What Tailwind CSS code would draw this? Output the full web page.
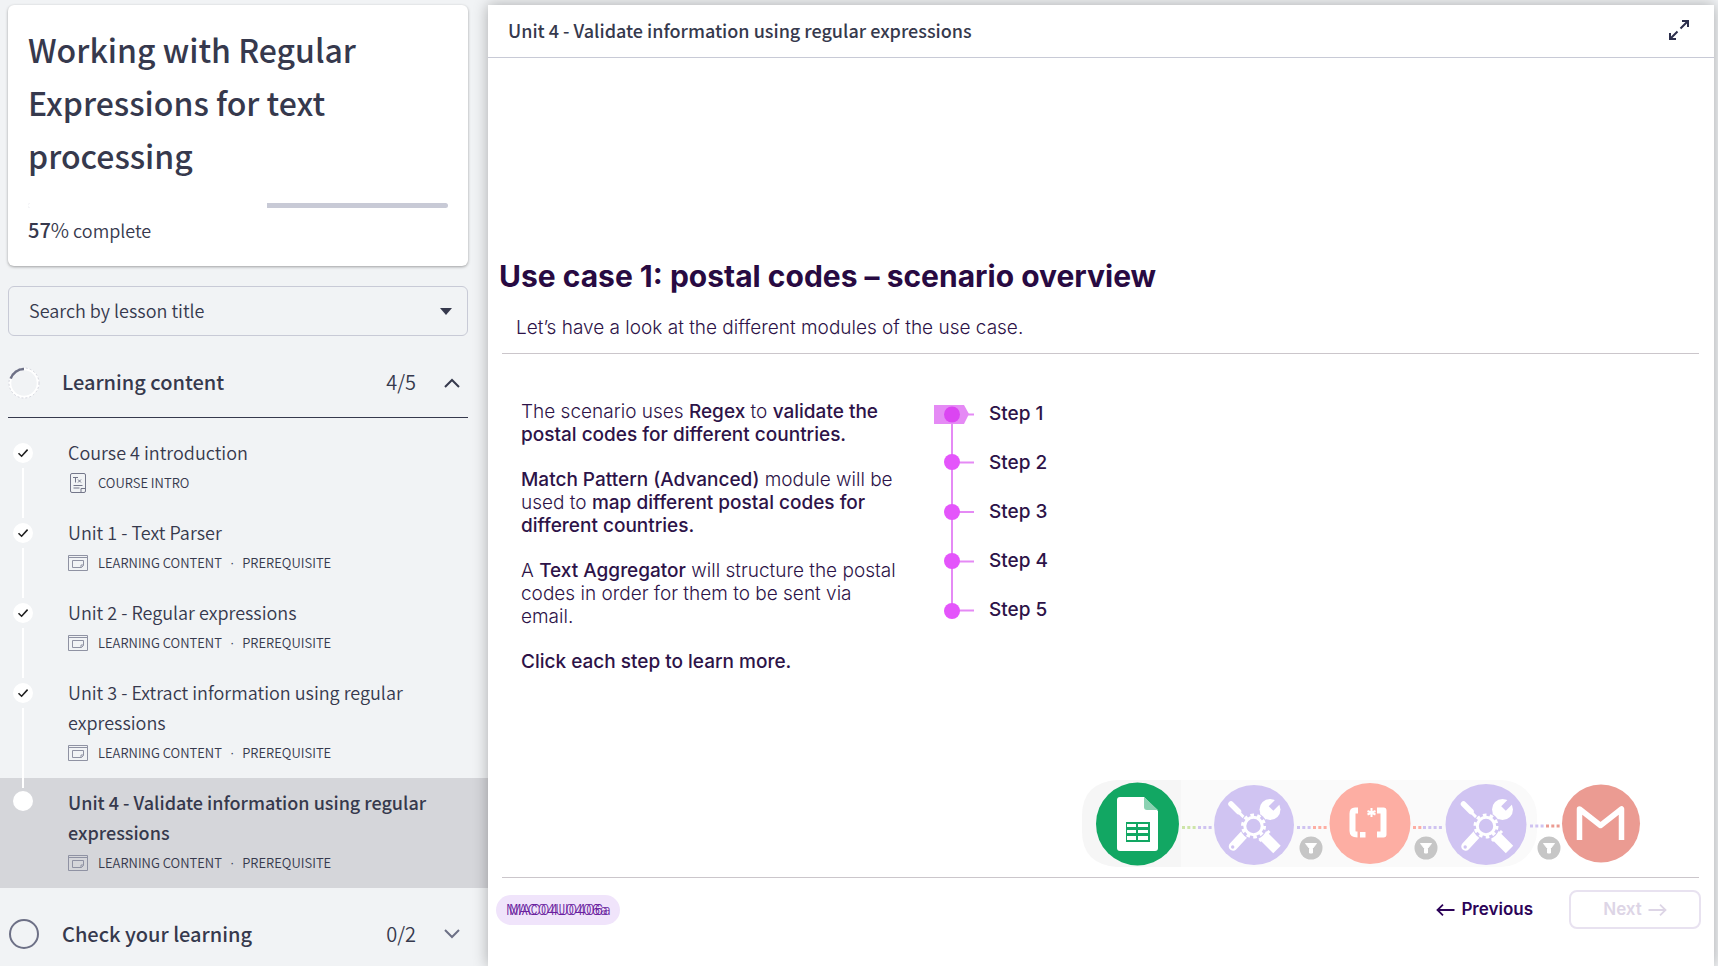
<!DOCTYPE html>
<html lang="en">
<head>
<meta charset="utf-8">
<title>Working with Regular Expressions for text processing</title>
<script src="https://cdn.jsdelivr.net/npm/@tailwindcss/browser@4"></script>
</head>
<body class="bg-[#f1f3f5] text-[#36394d]">
<svg class="hidden" aria-hidden="true">
  <symbol id="check" viewBox="0 0 20 20"><path d="M5.5 10.2 8.6 13.2 14.6 6.6" fill="none" stroke="#222" stroke-width="1.6"/></symbol>
  <symbol id="lesson" viewBox="0 0 20 16"><g fill="none" stroke="#8f92a3"><path d="M.5.5h19v15H.5zM.5 2.5h19"/><path d="M4.5 5.5h11v5l-2 2h-9zM15.5 10h-2.500v2.500"/></g></symbol>
  <symbol id="tools" viewBox="0 0 80 80">
    <g fill="none" stroke="#fff">
      <path d="M17.500 18 25 25.500" stroke-width="5.500" stroke-linecap="round"/><path d="M24 25 34 35" stroke-width="3"/>
      <circle cx="56.500" cy="23.500" r="10.500" fill="#fff" stroke="none"/><path d="M57.500 22.500 66.500 13.500" stroke="#d0c4f2" stroke-width="6.500"/><path d="M53 27 44 36" stroke-width="8"/>
      <path d="M32 47 19.500 60.500" stroke-width="8.500" stroke-linecap="round"/>
      <path d="M47 47 63.500 63.500" stroke-width="10.500"/><path d="M46 55 56 45" stroke-width="3"/>
    </g>
    <circle cx="40" cy="40" r="13.500" fill="#d0c4f2"/>
    <circle cx="40" cy="40" r="8.700" fill="none" stroke="#fff" stroke-width="3"/>
    <circle cx="40" cy="40" r="11" fill="none" stroke="#fff" stroke-width="3" stroke-dasharray="3.600 3.312"/>
    <circle cx="19.200" cy="61" r="1.700" fill="#d0c4f2"/>
  </symbol>
  <symbol id="filter" viewBox="0 0 24 24"><circle cx="12" cy="12" r="11.500" fill="#c6c6c6"/><path d="M6.500 7.500h11L13.500 12.500v4.500h-3v-4.500z" fill="#fff" stroke="#fff" stroke-linejoin="round"/></symbol>
</svg>
<div class="flex min-h-screen overflow-hidden font-['Noto_Sans_CJK_SC',sans-serif]">
  <aside class="w-[488px] shrink-0 pt-[5px] font-[350]">
    <section class="mr-5 ml-2 h-[261px] rounded-md bg-white px-5 pt-[18px] shadow-[0_1px_3px_rgba(0,0,0,0.35)]">
      <h1 class="text-[32px] leading-[53px] font-medium">Working with Regular Expressions for text processing</h1>
      <div class="mt-[21px] flex h-[5px] overflow-hidden rounded-full bg-[#c8cad6]" role="progressbar" aria-label="Course progress" aria-valuenow="57" aria-valuemin="0" aria-valuemax="100"><div class="bg-white" style="width:57%"></div></div>
      <p class="mt-[7px] text-lg leading-[30px]"><span class="text-xl leading-[30px]"><b class="font-medium">57</b>%</span> complete</p>
    </section>
    <button class="mx-2 mt-5 flex h-[50px] w-[460px] items-center justify-between rounded-md border border-[#c8cad6] px-5 text-lg"><span class="pb-[3px]">Search by lesson title</span>
      <svg class="-mr-[5px] h-[7px] w-3" viewBox="0 0 12 7"><path d="M0 0h12L6 7z" fill="#36394d"/></svg></button>

    <button class="mx-2 flex h-[82px] w-[460px] items-center border-b border-[#36394d] pt-3 text-left">
      <svg class="h-8 w-8" viewBox="0 0 32 32"><circle cx="16" cy="16" r="14" fill="none" stroke="#fff" stroke-width="2.500"/><circle cx="16" cy="16" r="15" fill="none" stroke="#b9bbc7" stroke-width=".6" stroke-dasharray="2 2"/><path d="M2.700 11.700A14 14 0 0 1 16 2" fill="none" stroke="#6d7086" stroke-width="2.500"/></svg>
      <span class="ml-[22px] flex-1 pb-[2px] text-xl font-medium">Learning content</span><span class="pb-[2px] text-xl">4/5</span>
      <svg class="mx-7 mr-2 h-4 w-4" viewBox="0 0 16 16"><path d="M1 12l7-7 7 7" fill="none" stroke="#36394d" stroke-width="2"/></svg>
    </button>
    <ul class="pt-[10px] text-lg leading-[30px]">
      <li class="flex pt-[9px] pb-[10px] pl-[13px]">
        <div class="flex w-[55px] shrink-0 flex-col pt-[6px]"><svg class="h-5 w-5 rounded-full bg-white"><use href="#check"/></svg><i class="mt-[5px] ml-[9px] -mb-5 w-[2px] flex-1 bg-white"></i></div>
        <div><a href="#intro" class="mb-px block">Course 4 introduction</a><p class="flex h-[30px] items-center gap-[10px] text-[13px]"><svg class="h-5 w-5" viewBox="0 0 20 20"><g fill="none" stroke="#74778a"><rect x="2.500" y=".5" width="15" height="19" rx="1.500"/><path d="M5 4.500h5M7.500 4.500v5M10 6.500l3 3M13 6.500l-3 3M5.500 12.500h9M5.500 15h6M17 15.500h-4v4"/></g></svg>COURSE INTRO</p></div>
      </li>
      <li class="flex pt-[9px] pb-[10px] pl-[13px]">
        <div class="flex w-[55px] shrink-0 flex-col pt-[6px]"><svg class="h-5 w-5 rounded-full bg-white"><use href="#check"/></svg><i class="mt-[5px] ml-[9px] -mb-5 w-[2px] flex-1 bg-white"></i></div>
        <div><a href="#unit1" class="mb-px block">Unit 1 - Text Parser</a><p class="flex h-[30px] items-center text-[13px]"><svg class="mr-[10px] h-4 w-5"><use href="#lesson"/></svg>LEARNING CONTENT<span class="px-2 font-['Liberation_Sans']">·</span>PREREQUISITE</p></div>
      </li>
      <li class="flex pt-[9px] pb-[10px] pl-[13px]">
        <div class="flex w-[55px] shrink-0 flex-col pt-[6px]"><svg class="h-5 w-5 rounded-full bg-white"><use href="#check"/></svg><i class="mt-[5px] ml-[9px] -mb-5 w-[2px] flex-1 bg-white"></i></div>
        <div><a href="#unit2" class="mb-px block">Unit 2 - Regular expressions</a><p class="flex h-[30px] items-center text-[13px]"><svg class="mr-[10px] h-4 w-5"><use href="#lesson"/></svg>LEARNING CONTENT<span class="px-2 font-['Liberation_Sans']">·</span>PREREQUISITE</p></div>
      </li>
      <li class="relative z-10 flex pt-[9px] pb-[10px] pl-[13px]">
        <div class="flex w-[55px] shrink-0 flex-col pt-[6px]"><svg class="h-5 w-5 rounded-full bg-white"><use href="#check"/></svg><i class="mt-[5px] ml-[9px] -mb-5 w-[2px] flex-1 bg-white"></i></div>
        <div class="pr-12"><a href="#unit3" class="mb-px block">Unit 3 - Extract information using regular expressions</a><p class="flex h-[30px] items-center text-[13px]"><svg class="mr-[10px] h-4 w-5"><use href="#lesson"/></svg>LEARNING CONTENT<span class="px-2 font-['Liberation_Sans']">·</span>PREREQUISITE</p></div>
      </li>
      <li class="flex bg-[#d5d6da] pt-[9px] pb-[10px] pl-[13px]">
        <div class="w-[55px] shrink-0 pt-1"><i class="block h-5 w-5 rounded-full bg-white"></i></div>
        <div class="pr-12"><a href="#unit4" aria-current="page" class="mb-px block font-medium">Unit 4 - Validate information using regular expressions</a><p class="flex h-[30px] items-center text-[13px]"><svg class="mr-[10px] h-4 w-5"><use href="#lesson"/></svg>LEARNING CONTENT<span class="px-2 font-['Liberation_Sans']">·</span>PREREQUISITE</p></div>
      </li>
    </ul>
    <button class="mx-2 flex h-[78px] w-[460px] items-center pt-[14px] text-left">
      <svg class="h-8 w-8" viewBox="0 0 32 32"><circle cx="16" cy="16" r="14" fill="none" stroke="#6d7086" stroke-width="2"/></svg>
      <span class="ml-[22px] flex-1 text-xl font-medium">Check your learning</span><span class="text-xl">0/2</span>
      <svg class="mx-7 mr-2 h-4 w-4" viewBox="0 0 16 16"><path d="M1 4l7 7 7-7" fill="none" stroke="#6d7086" stroke-width="2"/></svg>
    </button>
  </aside>

  <main class="mt-[5px] mr-1 flex-1 bg-white shadow-[0_0_14px_rgba(0,0,0,0.3)]">
    <header class="flex h-[53px] items-center justify-between border-b border-[#c8cad6] pr-[25px] pb-[3px] pl-5">
      <h2 class="text-lg font-medium">Unit 4 - Validate information using regular expressions</h2>
      <button aria-label="Full screen"><svg class="h-5 w-5" viewBox="0 0 20 20"><path d="M11.500 8.500 19 1M13 1h6v6M8.500 11.500 1 19M1 13v6h6" fill="none" stroke="#2c2f4c" stroke-width="2"/></svg></button>
    </header>
    <article class="pt-[194px] pr-[15px] pl-[14px] font-['Inter',sans-serif] text-[#2d1348]">
      <h3 class="-ml-[3px] text-[30px] leading-[48px] font-bold text-[#280a42]">Use case 1: postal codes – scenario overview</h3>
      <p class="border-b border-[#cbc6cb] pt-[13px] pb-[10px] pl-[14px] text-[19px] leading-[30px] font-light">Let’s have a look at the different modules of the use case.</p>
      <div class="flex pt-[46px] pl-[19px]">
        <div class="w-[412px] space-y-[22px] pr-8 text-[19px] leading-[23px] font-light [&_b]:font-medium">
          <p>The scenario uses <b>Regex</b> to <b>validate the postal codes for different countries.</b></p>
          <p><b>Match Pattern (Advanced)</b> module will be used to <b>map different postal codes for different countries.</b></p>
          <p>A <b>Text Aggregator</b> will structure the postal codes in order for them to be sent via email.</p>
          <p><b>Click each step to learn more.</b></p>
        </div>
        <svg class="h-[220px] w-11" viewBox="0 0 44 220"><path d="M1 5h30l5 9-5 10H1z" fill="#e58af5"/><path d="M19 15V210M19 14.500h22M19 62.500h22M19 112h22M19 161.500h22M19 210.500h22" stroke="#e58af5" stroke-width="2"/><circle cx="19" cy="14.500" r="8" fill="#db45f2"/><g fill="#e455fb"><circle cx="19" cy="62" r="8"/><circle cx="19" cy="112" r="8"/><circle cx="19" cy="161" r="8"/><circle cx="19" cy="211" r="8"/></g></svg>
        <div class="-mt-[10px] ml-3 flex flex-col text-[19px] font-medium">
          <button class="h-[49px] text-left">Step 1</button><button class="h-[49px] text-left">Step 2</button><button class="h-[49px] text-left">Step 3</button><button class="h-[49px] text-left">Step 4</button><button class="h-[49px] text-left">Step 5</button>
        </div>
      </div>
      <div class="mt-[106px] flex justify-end border-b border-[#cbc6cb] pr-[58px] pb-2">
        <svg class="h-[90px] w-[560px]" viewBox="1081 779 560 90" role="img" aria-label="Scenario modules">
          <rect x="1082" y="780" width="455" height="87" rx="36" fill="#fafafa"/><path d="M1181 780v87h-63q-36-2-36-36v-15q0-34 36-36z" fill="#f6f6f6"/>
          <circle cx="1137.500" cy="824" r="41.500" fill="#12a763"/>
          <path d="M1120 797h24l14 14v37q0 3-3 3h-35q-3 0-3-3v-48q0-3 3-3z" fill="#fff"/><path d="M1144 797l14 13h-11q-3 0-3-3z" fill="#8bd2b2"/>
          <path d="M1126 822h24v20h-24z" fill="#12a763"/><path d="M1127 824h9v3h-9zm11 0h10v3h-10zm-11 6h9v3h-9zm11 0h10v3h-10zm-11 6h9v4h-9zm11 0h10v4h-10z" fill="#fff"/>
          <g stroke-width="3" fill="none" stroke-dasharray="3 2.300"><path d="M1182 827.500h14" stroke="#cde5a8"/><path d="M1198 827.500h14" stroke="#cfc3f1"/><path d="M1297 827.500h14" stroke="#cfc3f1"/><path d="M1313 827.500h14" stroke="#fdaea3"/><path d="M1413 827.500h9" stroke="#fdaea3"/><path d="M1423 827.500h20" stroke="#cfc3f1"/><path d="M1530 826h14" stroke="#cfc3f1"/><path d="M1546 826h15" stroke="#eb9b92"/></g>
          <circle cx="1254" cy="825" r="40" fill="#d0c4f2"/><circle cx="1370" cy="823.500" r="40.500" fill="#fdaea3"/><circle cx="1486" cy="824.500" r="40.500" fill="#d0c4f2"/><circle cx="1601" cy="823.500" r="39" fill="#eb9b92"/>
          <use href="#tools" x="1213.500" y="786" width="80" height="80"/><use href="#tools" x="1446" y="786" width="80" height="80"/>
          <path d="M1358 810.500h-3q-2.500 0-2.500 3v17.500q0 3.500 5 3.500M1377 810.500h6.500v24h-6.500" fill="none" stroke="#fff" stroke-width="6" stroke-linejoin="round"/><path d="M1360 832h5.500v5.500h-5.500z" fill="#fff"/><path d="M1371.500 808v9M1367.500 811l8 3.500M1375.500 811l-8 3.500" stroke="#fff" stroke-width="2"/>
          <path d="M1579.500 840v-31l21 16.500 21-16.500v31" fill="none" stroke="#fff" stroke-width="5.500" stroke-linejoin="round"/>
          <use href="#filter" x="1299" y="836" width="24" height="24"/><use href="#filter" x="1414" y="836" width="24" height="24"/><use href="#filter" x="1537" y="836" width="24" height="24"/>
        </svg>
      </div>
      <footer class="-mr-[2px] -ml-[6px] flex items-center pt-3">
        <div class="grid h-[30px] w-[124px] items-center rounded-full bg-[#f0e4fb] pl-[10px] text-sm font-light text-[#6b1fa0]"><span class="col-start-1 row-start-1">MAC04U0406a</span><span class="col-start-1 row-start-1 pl-[3px]" aria-hidden="true">MAC04U0406a</span></div>
        <button class="ml-auto flex items-center gap-[6px] text-[17px] font-semibold text-[#2c0358]"><svg class="h-3 w-[19px]" viewBox="0 0 19 12"><path d="M18.500 6H1.500M7 .7 1.500 6 7 11.300" fill="none" stroke="currentColor" stroke-width="1.800"/></svg>Previous</button>
        <button disabled class="ml-9 flex h-[39px] w-[132px] items-center justify-center gap-[6px] rounded-lg border-2 border-[#e8e2f0] text-[17px] font-semibold text-[#ddd5e6]">Next<svg class="h-3 w-[19px]" viewBox="0 0 19 12"><path d="M.5 6h17M12 .7 17.500 6 12 11.300" fill="none" stroke="currentColor" stroke-width="1.800"/></svg></button>
      </footer>
    </article>
  </main>
</div>
</body>
</html>
